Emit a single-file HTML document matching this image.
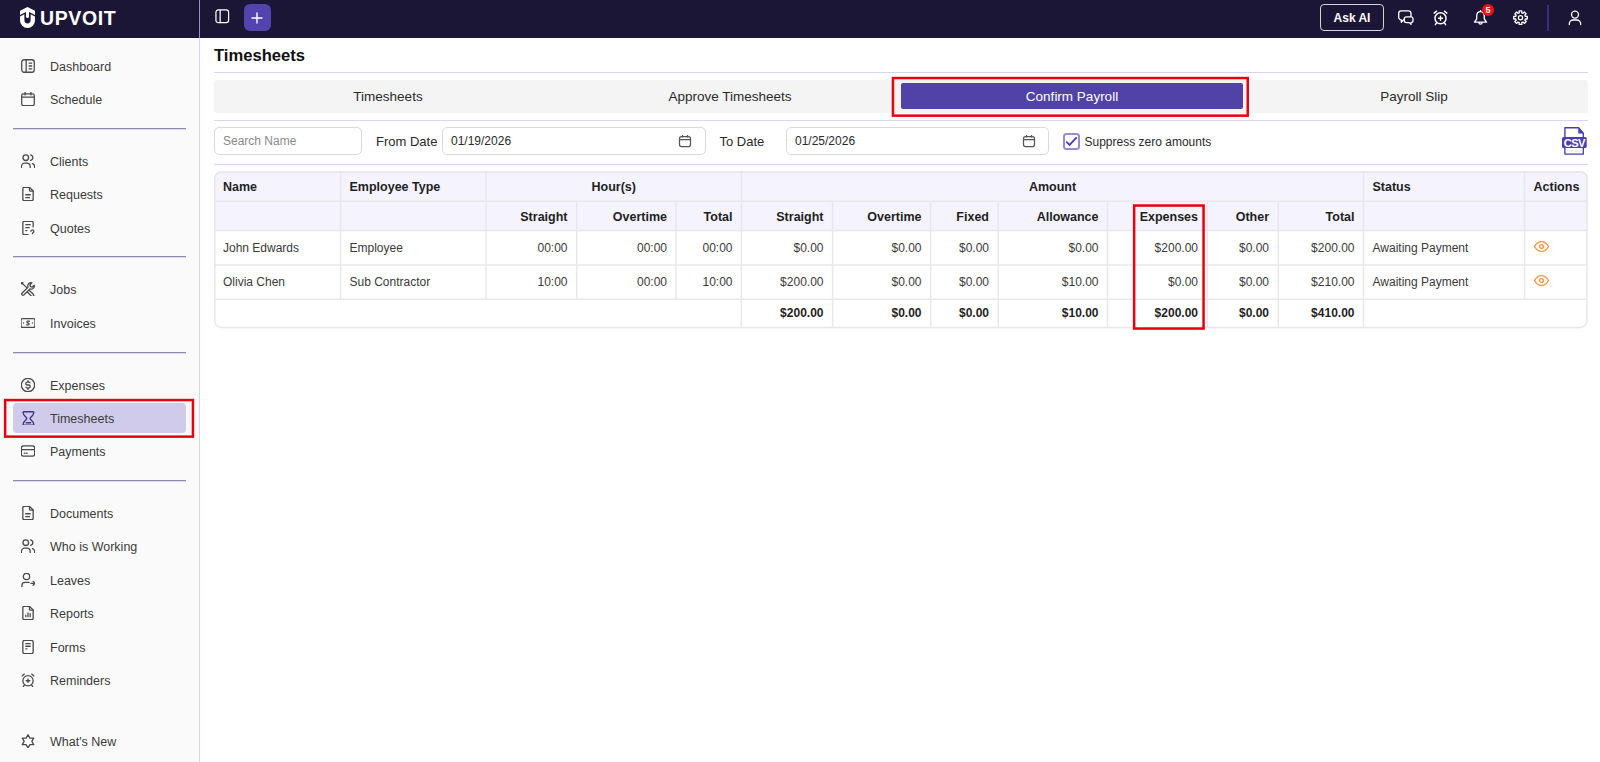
<!DOCTYPE html>
<html><head><meta charset="utf-8">
<style>
*{box-sizing:border-box;margin:0;padding:0}
html,body{width:1600px;height:762px;overflow:hidden;background:#fff;font-family:"Liberation Sans",sans-serif;color:#222}
.abs{position:absolute}
#top{position:absolute;left:0;top:0;width:1600px;height:38px;background:#1c1636}
#side{position:absolute;left:0;top:0;width:200.2px;height:762px;background:#fafafa;border-right:1.5px solid #d9d5f0}
#side:before{content:"";position:absolute;left:0;top:38px;width:199px;height:1px;background:#fff}
.ni{position:absolute;left:0;width:200px;height:20px;font-size:12.5px;color:#3b3b3b;line-height:20px}
.ni span{position:absolute;left:50px;top:0.5px}
.ni svg{position:absolute;left:21px;top:3px;width:14px;height:14px;fill:none;stroke:#4a4a4a;stroke-width:1.75;stroke-linecap:round;stroke-linejoin:round}
.div{position:absolute;left:13px;width:173px;height:2px;border-top:1px solid #8c87b0;border-bottom:1px solid #dedbee}
.hl{position:absolute;left:200px;width:1388px}

.tab{position:absolute;top:83.7px;width:342px;height:26px;line-height:26px;text-align:center;font-size:13.5px;color:#2a2a2a}
.inp{position:absolute;top:127px;height:28px;border:1px solid #d9d9d9;border-radius:5px;font-size:12px;line-height:27px;padding-left:8px;color:#2a2a2a}
.lbl{position:absolute;top:131.6px;font-size:13px;line-height:20px;color:#2a2a2a}
.cal{position:absolute;top:134px;width:14px;height:14px;fill:none;stroke:#555;stroke-width:1.25}

.th{position:absolute;font-size:12.5px;font-weight:bold;color:#1f1f1f;line-height:18px;white-space:nowrap}
.td{position:absolute;font-size:12px;color:#3a3a3a;line-height:18px;margin-top:0.8px;white-space:nowrap}
.tt{position:absolute;font-size:12px;font-weight:bold;color:#1f1f1f;line-height:18px;margin-top:0.7px;white-space:nowrap}
</style></head><body><svg width="0" height="0" style="position:absolute"><defs><g id="calic"><rect x="1.5" y="2.5" width="11" height="10" rx="2"/><path d="M4.5 1v2.5M9.5 1v2.5M1.5 5.7h11"/></g></defs></svg>
<div id="side">
<div class="abs" style="left:13px;top:403px;width:173px;height:30px;border-radius:4px;background:#d0cbeb"></div><svg class="abs" style="left:0;top:0;overflow:visible" width="1" height="1"><rect x="5.15" y="400.05" width="187.80" height="36.60" fill="none" stroke="#e8000e" stroke-width="2.5"/></svg>
<div class="div" style="top:128px"></div><div class="div" style="top:256px"></div><div class="div" style="top:352px"></div><div class="div" style="top:480px"></div>
<div class="ni" style="top:56px"><svg viewBox="2.5 2.5 19 19"><rect x="3.5" y="3.5" width="17" height="17" rx="3"/><path d="M9.5 3.5v17M13.5 8h3.5M13.5 12h3.5M13.5 16h3.5"/></svg><span>Dashboard</span></div>
<div class="ni" style="top:89px"><svg viewBox="2.5 2.5 19 19"><rect x="3.5" y="5" width="17" height="16" rx="2.5"/><path d="M16 3v3.5M8 3v3.5M3.5 9.5h17"/></svg><span>Schedule</span></div>
<div class="ni" style="top:151px"><svg viewBox="2.5 2.5 19 19"><circle cx="9" cy="7.5" r="3.8"/><path d="M3 21v-1.5a4.5 4.5 0 0 1 4.5-4.5h3a4.5 4.5 0 0 1 4.5 4.5V21M15.5 3.6a3.9 3.9 0 0 1 0 7.6M21 21v-1.5a4.3 4.3 0 0 0-3-4"/></svg><span>Clients</span></div>
<div class="ni" style="top:184px"><svg viewBox="2.5 2.5 19 19"><path d="M14 3v4a1 1 0 0 0 1 1h4"/><path d="M17 21H7a2 2 0 0 1-2-2V5a2 2 0 0 1 2-2h7l5 5v11a2 2 0 0 1-2 2z"/><path d="M9 13h6M9 17h5"/></svg><span>Requests</span></div>
<div class="ni" style="top:218px"><svg viewBox="2.5 2.5 19 19"><path d="M19 10.5V5a2 2 0 0 0-2-2H7a2 2 0 0 0-2 2v14a2 2 0 0 0 2 2h5"/><path d="M9 7.5h6M9 11.5h4.5M9 15.5h1.5"/><path d="M16 16.5a2 2 0 1 1 2.8 1.8c-.5.3-.8.7-.8 1.2"/><path d="M18 22.3v.01"/></svg><span>Quotes</span></div>
<div class="ni" style="top:279px"><svg viewBox="2.5 2.5 19 19"><path d="M3.8 17.7l8.3-8.3a4.3 4.3 0 0 1 5.2-5.8l-2.6 2.6.6 2.5 2.5.6 2.6-2.6a4.3 4.3 0 0 1-5.8 5.2l-8.3 8.3a1.8 1.8 0 0 1-2.5-2.5z"/><path d="M4 4l6.5 6.5M14 14l5.5 5.5a1.8 1.8 0 0 1-2.5 2.5L11.5 16.5"/><circle cx="3.7" cy="3.7" r="1.2"/></svg><span>Jobs</span></div>
<div class="ni" style="top:313px"><svg viewBox="2.5 2.5 19 19"><rect x="2.5" y="6" width="19" height="12" rx="2"/><path d="M6 12h.01M18 12h.01"/><path d="M14 9.5h-2.5a1.3 1.3 0 0 0 0 2.5h1a1.3 1.3 0 0 1 0 2.5H10"/></svg><span>Invoices</span></div>
<div class="ni" style="top:375px"><svg viewBox="2.5 2.5 19 19"><circle cx="12" cy="12" r="9"/><path d="M14.8 9a2 2 0 0 0-1.8-1h-2a2 2 0 0 0 0 4h2a2 2 0 0 1 0 4h-2a2 2 0 0 1-1.8-1M12 6v2M12 16v2"/></svg><span>Expenses</span></div>
<div class="ni" style="top:408px"><svg viewBox="21 410.6 14 14" style="stroke:#3b3785;stroke-width:1.4"><path d="M23.9 411.4H33A0.8 0.8 0 0 1 33.8 412.3C33.5 415.5 30.1 416.6 30.1 418.1C30.1 419.6 33.5 420.7 33.8 423.9A0.8 0.8 0 0 1 33 424.8H23.9A0.8 0.8 0 0 1 23.1 423.9C23.4 420.7 26.8 419.6 26.8 418.1C26.8 416.6 23.4 415.5 23.1 412.3A0.8 0.8 0 0 1 23.9 411.4Z"/><path d="M26.3 422.4H30.6"/></svg><span>Timesheets</span></div>
<div class="ni" style="top:441px"><svg viewBox="2.5 2.5 19 19"><rect x="3" y="5" width="18" height="14" rx="3"/><path d="M3 10h18M7 15h1M10 15h1"/></svg><span>Payments</span></div>
<div class="ni" style="top:503px"><svg viewBox="2.5 2.5 19 19"><path d="M14 3v4a1 1 0 0 0 1 1h4"/><path d="M17 21H7a2 2 0 0 1-2-2V5a2 2 0 0 1 2-2h7l5 5v11a2 2 0 0 1-2 2z"/><path d="M9 13h6M9 17h5"/></svg><span>Documents</span></div>
<div class="ni" style="top:536px"><svg viewBox="2.5 2.5 19 19"><circle cx="9" cy="7.5" r="3.8"/><path d="M3 21v-1.5a4.5 4.5 0 0 1 4.5-4.5h3a4.5 4.5 0 0 1 4.5 4.5V21M15.5 3.6a3.9 3.9 0 0 1 0 7.6M21 21v-1.5a4.3 4.3 0 0 0-3-4"/></svg><span>Who is Working</span></div>
<div class="ni" style="top:570px"><svg viewBox="2.5 2.5 19 19"><circle cx="10" cy="7.2" r="4.3"/><path d="M3.8 21v-1.5a4.2 4.2 0 0 1 4.2-4.2h5.5M16 16.5h5.5M19 13.8l2.6 2.7-2.6 2.7"/></svg><span>Leaves</span></div>
<div class="ni" style="top:603px"><svg viewBox="2.5 2.5 19 19"><path d="M14 3v4a1 1 0 0 0 1 1h4"/><path d="M17 21H7a2 2 0 0 1-2-2V5a2 2 0 0 1 2-2h7l5 5v11a2 2 0 0 1-2 2z"/><path d="M9 17v-2M12 17v-5M15 17v-4"/></svg><span>Reports</span></div>
<div class="ni" style="top:637px"><svg viewBox="2.5 2.5 19 19"><rect x="5" y="3" width="14" height="18" rx="2.5"/><path d="M9 7.5h6M9 11h6M9 14.5h1.5"/></svg><span>Forms</span></div>
<div class="ni" style="top:670px"><svg viewBox="2.5 2.5 19 19"><circle cx="12" cy="13" r="7"/><path d="M7 4L4 6.5M17 4l3 2.5M9.5 13h5M12 10.5v5M7 19l-1.5 2M17 19l1.5 2"/></svg><span>Reminders</span></div>
<div class="ni" style="top:731px"><svg viewBox="2.5 2.5 19 19"><path d="M12 3.5l2.6 4.5h5.2l-2.6 4.5 2.6 4.5h-5.2L12 21.5l-2.6-4.5H4.2l2.6-4.5L4.2 8h5.2z"/></svg><span>What's New</span></div>
</div>

<div id="top">
  <!-- logo -->
  <svg class="abs" style="left:15px;top:4px" width="25" height="28" viewBox="15 4 25 28">
    <path d="M20 10.8L27.5 6.9L35 10.8V15.1L29 11.9V16.6A1.5 1.5 0 0 1 26 16.6V11.9L20 15.1Z" fill="#fff"/>
    <path d="M20 16.6L24.4 14.25V20.3A3.1 3.1 0 0 0 30.6 20.3V14.25L35 16.6V20.5A7.5 7.5 0 0 1 20 20.5Z" fill="#fff"/>
  </svg>
  <div class="abs" style="left:40px;top:6px;font-size:19.5px;font-weight:bold;color:#fff;letter-spacing:0.6px;line-height:24px">UPVOIT</div>
  <div class="abs" style="left:199px;top:0;width:1.4px;height:38px;background:#9892c2"></div>
  <!-- toggle -->
  <svg class="abs" style="left:214.5px;top:8.5px" width="15" height="15" viewBox="0 0 16 16"><rect x="1" y="1" width="13.5" height="13.5" rx="2.5" fill="none" stroke="#fff" stroke-width="1.3"/><line x1="5.5" y1="1" x2="5.5" y2="14.5" stroke="#fff" stroke-width="1.3"/></svg>
  <div class="abs" style="left:243.5px;top:4px;width:27px;height:27px;border-radius:6px;background:#5344ad"></div>
  <svg class="abs" style="left:250px;top:11px" width="14" height="14" viewBox="0 0 14 14"><path d="M7 1.5V12.5M1.5 7H12.5" stroke="#fff" stroke-width="1.4"/></svg>
  <!-- right -->
  <div class="abs" style="left:1320px;top:4px;width:64px;height:27px;border:1.5px solid #d4d2dc;border-radius:4px;color:#fff;font-size:12px;font-weight:bold;text-align:center;line-height:26px">Ask AI</div>

  <svg class="abs" style="left:1396px;top:8px;width:20px;height:19px" viewBox="1396 8 20 19" fill="none" stroke="#fff" stroke-width="1.3" stroke-linejoin="round"><path d="M1401.2 10.9H1408.5A2.5 2.5 0 0 1 1411 13.4V17.3A2.5 2.5 0 0 1 1408.5 19.8H1403.6L1401.3 22.3V19.8A2.5 2.5 0 0 1 1398.7 17.3V13.4A2.5 2.5 0 0 1 1401.2 10.9Z"/><path d="M1406.3 16.8H1411A2 2 0 0 1 1413 18.8V20.6A2 2 0 0 1 1411 22.6V24.4L1409.2 22.6H1406.3A2 2 0 0 1 1404.3 20.6V18.8A2 2 0 0 1 1406.3 16.8Z" fill="#1c1636"/></svg>
  <svg class="abs" style="left:1431px;top:8px;width:19px;height:19px" viewBox="0 0 24 24" fill="none" stroke="#fff" stroke-width="1.8" stroke-linecap="round" stroke-linejoin="round"><circle cx="12" cy="13" r="7"/><path d="M7 4L4 6.5M17 4l3 2.5M9.5 13h5M12 10.5v5M7 19l-1.5 2M17 19l1.5 2"/></svg>
  <svg class="abs" style="left:1472px;top:8px;width:18px;height:19px" viewBox="1472 8 18 19" fill="none" stroke="#fff" stroke-width="1.3" stroke-linecap="round" stroke-linejoin="round"><path d="M1480.5 11.6C1477.9 11.6 1476.7 13.8 1476.7 16.2V18.9L1474.5 22.2H1486.5L1484.3 18.9V16.2C1484.3 13.8 1483.1 11.6 1480.5 11.6ZM1480.5 11.6V10.6M1478.9 22.5A1.6 1.6 0 0 0 1482.1 22.5"/></svg>
  <div class="abs" style="left:1482px;top:4px;width:12px;height:12px;border-radius:50%;background:#ee1111;color:#fff;font-size:9px;font-weight:bold;text-align:center;line-height:12px">5</div>
  <svg class="abs" style="left:1510px;top:7px;width:21px;height:21px" viewBox="1510 7 21 21" fill="none" stroke="#fff" stroke-width="1.3" stroke-linejoin="round"><path d="M1525.33 16.41 L1527.27 16.38 L1527.27 19.02 L1525.33 18.99 L1524.83 20.20 L1526.22 21.56 L1524.36 23.42 L1523.00 22.03 L1521.79 22.53 L1521.82 24.47 L1519.18 24.47 L1519.21 22.53 L1518.00 22.03 L1516.64 23.42 L1514.78 21.56 L1516.17 20.20 L1515.67 18.99 L1513.73 19.02 L1513.73 16.38 L1515.67 16.41 L1516.17 15.20 L1514.78 13.84 L1516.64 11.98 L1518.00 13.37 L1519.21 12.87 L1519.18 10.93 L1521.82 10.93 L1521.79 12.87 L1523.00 13.37 L1524.36 11.98 L1526.22 13.84 L1524.83 15.20Z"/><circle cx="1520.5" cy="17.7" r="2.1"/></svg>
  <div class="abs" style="left:1547px;top:4.5px;width:1.5px;height:26px;background:#362f7e"></div>
  <svg class="abs" style="left:1566px;top:8px;width:18px;height:19px" viewBox="1566 8 18 19" fill="none" stroke="#fff" stroke-width="1.3" stroke-linecap="round" stroke-linejoin="round"><circle cx="1575" cy="14.6" r="3.5"/><path d="M1569.3 24.6V23.8A3.8 3.8 0 0 1 1573.1 20H1576.9A3.8 3.8 0 0 1 1580.7 23.8V24.6"/></svg>
</div>

<div id="main">
  <div class="abs" style="left:214px;top:46px;font-size:16.6px;font-weight:bold;color:#111;line-height:20px">Timesheets</div>
  <div class="abs" style="left:214px;top:72px;width:1374px;height:1px;background:#d9d4f3"></div>

  <div class="abs" style="left:214px;top:80px;width:1374px;height:32.5px;background:#f4f4f4;border-radius:3px"></div>
  <div class="tab" style="left:217px">Timesheets</div>
  <div class="tab" style="left:559px">Approve Timesheets</div>
  <div class="abs" style="left:901px;top:83px;width:342px;height:26px;background:#5142a8;border-radius:2px"></div>
  <div class="tab" style="left:901px;color:#fff">Confirm Payroll</div>
  <div class="tab" style="left:1243px">Payroll Slip</div>
  <svg class="abs" style="left:0;top:0;overflow:visible" width="1" height="1"><rect x="892.95" y="78.05" width="354.80" height="37.60" fill="none" stroke="#e8000e" stroke-width="2.5"/></svg>
  <div class="abs" style="left:214px;top:120px;width:1374px;height:1px;background:#d9d4f3"></div>

  <div class="inp" style="left:214px;width:148px;color:#8a8a8a">Search Name</div>
  <div class="lbl" style="left:376px">From Date</div>
  <div class="inp" style="left:442px;width:264px">01/19/2026</div>
  <svg class="cal" style="left:678px"><use href="#calic"/></svg>
  <div class="lbl" style="left:719.5px">To Date</div>
  <div class="inp" style="left:786px;width:263px">01/25/2026</div>
  <svg class="cal" style="left:1022px"><use href="#calic"/></svg>
  <div class="abs" style="left:1062.5px;top:132.5px;width:17px;height:17px;border:2px solid #958bd6;border-radius:3.5px"></div>
  <svg class="abs" style="left:1062.5px;top:132.5px" width="17" height="17" viewBox="0 0 17 17"><path d="M3.8 9.1L6.6 11.9L13.2 4.8" fill="none" stroke="#4a3db0" stroke-width="1.8" stroke-linecap="round" stroke-linejoin="miter"/></svg>
  <div class="lbl" style="left:1084.5px;font-size:12px">Suppress zero amounts</div>
  <div class="abs" style="left:214px;top:164px;width:1374px;height:1px;background:#d9d4f3"></div>
<svg class="abs" style="left:1561px;top:126px" width="27" height="30" viewBox="1561 126 27 30">
<path d="M1564.9 127.8H1578.6L1583.3 133.3V154.1H1564.9Z" fill="#fff" stroke="#4b3fb0" stroke-width="1.4" stroke-linejoin="round"/>
<path d="M1578.3 127.5V133.6H1583.6Z" fill="#4b3fb0"/>
<rect x="1562" y="137" width="24.7" height="11" rx="1.5" fill="#4b3fb0"/>
<line x1="1565.5" y1="151" x2="1583" y2="151" stroke="#e6e4f4" stroke-width="0.8"/>
<text x="1574.3" y="146.6" text-anchor="middle" font-family="Liberation Sans" font-weight="bold" font-size="11.2" fill="#fff" letter-spacing="-0.6">CSV</text>
</svg>
<svg class="abs" style="left:0;top:0;overflow:visible" width="1" height="1"><defs><clipPath id="tc"><rect x="214" y="171" width="1374" height="158" rx="7"/></clipPath></defs><rect x="214" y="171" width="1374" height="158" rx="7" fill="#fff"/><rect x="214" y="171" width="1374" height="59.6" fill="#f5f3fe" clip-path="url(#tc)"/><g stroke="#e8e8ea" stroke-width="1.5"><line x1="214.5" y1="201.3" x2="1587.5" y2="201.3"/><line x1="214.5" y1="230.6" x2="1587.5" y2="230.6"/><line x1="214.5" y1="265" x2="1587.5" y2="265"/><line x1="214.5" y1="299.3" x2="1587.5" y2="299.3"/><line x1="340.6" y1="171" x2="340.6" y2="299.3"/><line x1="486" y1="171" x2="486" y2="299.3"/><line x1="576.7" y1="201.3" x2="576.7" y2="299.3"/><line x1="675.9" y1="201.3" x2="675.9" y2="299.3"/><line x1="741.4" y1="171" x2="741.4" y2="328"/><line x1="832.6" y1="201.3" x2="832.6" y2="328"/><line x1="930.6" y1="201.3" x2="930.6" y2="328"/><line x1="998.2" y1="201.3" x2="998.2" y2="328"/><line x1="1107.5" y1="201.3" x2="1107.5" y2="328"/><line x1="1207.3" y1="201.3" x2="1207.3" y2="328"/><line x1="1278.3" y1="201.3" x2="1278.3" y2="328"/><line x1="1363.5" y1="171" x2="1363.5" y2="328"/><line x1="1524.5" y1="171" x2="1524.5" y2="299.3"/></g><rect x="214.75" y="171.95" width="1372.2" height="155.5" rx="6.5" fill="none" stroke="#e8e8ea" stroke-width="1.5"/></svg>
<div class="th" style="left:223px;top:177.6px">Name</div>
<div class="th" style="left:349.5px;top:177.6px">Employee Type</div>
<div class="th" style="left:486px;width:255.5px;top:177.6px;text-align:center">Hour(s)</div>
<div class="th" style="left:741.5px;width:622.0px;top:177.6px;text-align:center">Amount</div>
<div class="th" style="left:1372.5px;top:177.6px">Status</div>
<div class="th" style="left:1533.5px;top:177.6px">Actions</div>
<div class="th" style="left:486px;width:81.5px;top:207.5px;text-align:right">Straight</div>
<div class="th" style="left:576.5px;width:90.5px;top:207.5px;text-align:right">Overtime</div>
<div class="th" style="left:676px;width:56.5px;top:207.5px;text-align:right">Total</div>
<div class="th" style="left:741.5px;width:82.0px;top:207.5px;text-align:right">Straight</div>
<div class="th" style="left:832.5px;width:89.0px;top:207.5px;text-align:right">Overtime</div>
<div class="th" style="left:930.5px;width:58.5px;top:207.5px;text-align:right">Fixed</div>
<div class="th" style="left:998px;width:100.5px;top:207.5px;text-align:right">Allowance</div>
<div class="th" style="left:1107.5px;width:90.5px;top:207.5px;text-align:right">Expenses</div>
<div class="th" style="left:1207px;width:62px;top:207.5px;text-align:right">Other</div>
<div class="th" style="left:1278px;width:76.5px;top:207.5px;text-align:right">Total</div>
<div class="td" style="left:223px;top:238.2px">John Edwards</div>
<div class="td" style="left:349.5px;top:238.2px">Employee</div>
<div class="td" style="left:486px;width:81.5px;top:238.2px;text-align:right">00:00</div>
<div class="td" style="left:576.5px;width:90.5px;top:238.2px;text-align:right">00:00</div>
<div class="td" style="left:676px;width:56.5px;top:238.2px;text-align:right">00:00</div>
<div class="td" style="left:741.5px;width:82.0px;top:238.2px;text-align:right">$0.00</div>
<div class="td" style="left:832.5px;width:89.0px;top:238.2px;text-align:right">$0.00</div>
<div class="td" style="left:930.5px;width:58.5px;top:238.2px;text-align:right">$0.00</div>
<div class="td" style="left:998px;width:100.5px;top:238.2px;text-align:right">$0.00</div>
<div class="td" style="left:1107.5px;width:90.5px;top:238.2px;text-align:right">$200.00</div>
<div class="td" style="left:1207px;width:62px;top:238.2px;text-align:right">$0.00</div>
<div class="td" style="left:1278px;width:76.5px;top:238.2px;text-align:right">$200.00</div>
<div class="td" style="left:1372.5px;top:238.2px">Awaiting Payment</div>
<div class="td" style="left:223px;top:272.5px">Olivia Chen</div>
<div class="td" style="left:349.5px;top:272.5px">Sub Contractor</div>
<div class="td" style="left:486px;width:81.5px;top:272.5px;text-align:right">10:00</div>
<div class="td" style="left:576.5px;width:90.5px;top:272.5px;text-align:right">00:00</div>
<div class="td" style="left:676px;width:56.5px;top:272.5px;text-align:right">10:00</div>
<div class="td" style="left:741.5px;width:82.0px;top:272.5px;text-align:right">$200.00</div>
<div class="td" style="left:832.5px;width:89.0px;top:272.5px;text-align:right">$0.00</div>
<div class="td" style="left:930.5px;width:58.5px;top:272.5px;text-align:right">$0.00</div>
<div class="td" style="left:998px;width:100.5px;top:272.5px;text-align:right">$10.00</div>
<div class="td" style="left:1107.5px;width:90.5px;top:272.5px;text-align:right">$0.00</div>
<div class="td" style="left:1207px;width:62px;top:272.5px;text-align:right">$0.00</div>
<div class="td" style="left:1278px;width:76.5px;top:272.5px;text-align:right">$210.00</div>
<div class="td" style="left:1372.5px;top:272.5px">Awaiting Payment</div>
<div class="tt" style="left:741.5px;width:82.0px;top:303.5px;text-align:right">$200.00</div>
<div class="tt" style="left:832.5px;width:89.0px;top:303.5px;text-align:right">$0.00</div>
<div class="tt" style="left:930.5px;width:58.5px;top:303.5px;text-align:right">$0.00</div>
<div class="tt" style="left:998px;width:100.5px;top:303.5px;text-align:right">$10.00</div>
<div class="tt" style="left:1107.5px;width:90.5px;top:303.5px;text-align:right">$200.00</div>
<div class="tt" style="left:1207px;width:62px;top:303.5px;text-align:right">$0.00</div>
<div class="tt" style="left:1278px;width:76.5px;top:303.5px;text-align:right">$410.00</div>
<svg class="abs" style="left:1533px;top:238.5px" width="17" height="15" viewBox="0 0 17 15"><path d="M1.5 7.5C3.3 4.3 5.7 2.6 8.5 2.6S13.7 4.3 15.5 7.5C13.7 10.7 11.3 12.4 8.5 12.4S3.3 10.7 1.5 7.5Z" fill="none" stroke="#f7963c" stroke-width="1.4" stroke-linejoin="round"/><circle cx="8.5" cy="7.5" r="1.9" fill="none" stroke="#f7963c" stroke-width="1.4"/></svg>
<svg class="abs" style="left:1533px;top:273px" width="17" height="15" viewBox="0 0 17 15"><path d="M1.5 7.5C3.3 4.3 5.7 2.6 8.5 2.6S13.7 4.3 15.5 7.5C13.7 10.7 11.3 12.4 8.5 12.4S3.3 10.7 1.5 7.5Z" fill="none" stroke="#f7963c" stroke-width="1.4" stroke-linejoin="round"/><circle cx="8.5" cy="7.5" r="1.9" fill="none" stroke="#f7963c" stroke-width="1.4"/></svg>
<svg class="abs" style="left:0;top:0;overflow:visible" width="1" height="1"><rect x="1134.15" y="205.55" width="69.40" height="123.00" fill="none" stroke="#e8000e" stroke-width="2.5"/></svg>
</div>
</body></html>
